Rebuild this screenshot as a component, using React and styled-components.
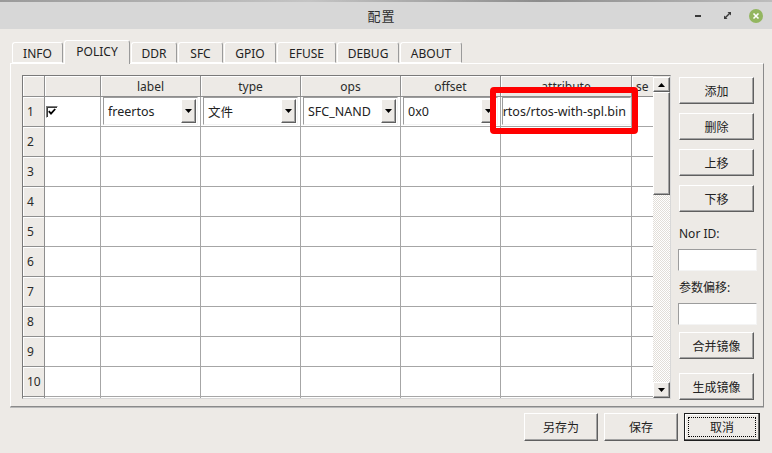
import React from 'react';
import styled, { createGlobalStyle, css } from 'styled-components';

const GlobalStyle = createGlobalStyle`
  body {
    margin: 0;
    background: #edeae6;
    font-family: "Noto Sans", "Noto Sans CJK SC", sans-serif;
    color: #222;
  }
  * { box-sizing: border-box; }
`;

const raised = css`
  background: #edeae6;
  border: 1px solid;
  border-color: #ffffff #5f5f5f #5f5f5f #ffffff;
  box-shadow: inset -1px -1px 0 #a3a3a3;
`;

const sunken = css`
  background: #fff;
  border: 1px solid;
  border-color: #9c9c9c #f4f4f4 #f4f4f4 #9c9c9c;
`;

const Window = styled.div`
  position: relative;
  width: 772px;
  height: 453px;
  overflow: hidden;
  background: #edeae6;
  display: flex;
  flex-direction: column;
`;

const TopStrip = styled.div`
  height: 2px;
  background: linear-gradient(90deg, #9a9a9a, #c4c4c4 40%, #8c8c8c 70%, #bdbdbd);
`;

const TitleBar = styled.div`
  height: 27px;
  background: #d7d7d7;
  display: grid;
  grid-template-columns: 1fr auto 1fr;
  align-items: center;
  padding-right: 9px;
`;

const Title = styled.div`
  font-size: 13px;
  color: #2e2e2e;
  letter-spacing: 1px;
`;

const Controls = styled.div`
  justify-self: end;
  display: flex;
  align-items: center;
  gap: 17px;
`;

const Minimize = styled.div`
  width: 6px;
  height: 2px;
  margin-right: 5px;
  background: #3a3a3a;
`;

const Close = styled.div`
  width: 14px;
  height: 14px;
  border-radius: 50%;
  background: #93b660;
  display: flex;
  align-items: center;
  justify-content: center;
`;

const Body = styled.div`
  flex: 1;
  padding: 11px 8px 0 10px;
  display: flex;
  flex-direction: column;
`;

const TabRow = styled.div`
  display: flex;
  align-items: flex-end;
  gap: 1px;
  height: 23px;
  padding-left: 2px;
  position: relative;
  z-index: 1;
`;

const Tab = styled.div`
  width: ${p => p.$w}px;
  height: ${p => (p.$active ? 24 : 21)}px;
  margin-bottom: ${p => (p.$active ? -1 : 0)}px;
  background: #edeae6;
  border: 1px solid;
  border-bottom: ${p => (p.$active ? 'none' : '1px solid #fff')};
  border-color: #fff #9a9a9a #fff #fff;
  border-radius: 3px 3px 0 0;
  display: flex;
  align-items: center;
  justify-content: center;
  padding: ${p => (p.$active ? '0 0 2px' : '2px 0 0')};
  font-size: 12px;
  color: #222;
`;

const Panel = styled.div`
  width: 754px;
  height: 344px;
  border: 1px solid;
  border-color: #fff #8a8a8a #8a8a8a #fff;
  box-shadow: 0 1px 0 #b9b9b9;
  display: flex;
  gap: 8px;
  padding: 11px 0 0 11px;
`;

const TableFrame = styled.div`
  width: 649px;
  height: 324px;
  display: flex;
  border: 1px solid;
  border-color: #7a7a7a #d8d8d8 #d8d8d8 #7a7a7a;
`;

const Grid = styled.div`
  flex: 1;
  overflow: hidden;
  display: grid;
  grid-template-columns: 22px 56px 100px 100px 100px 100px 131px 60px;
  grid-template-rows: 21px repeat(11, 30px);
  background: #fff;
`;

const HeadCell = styled.div`
  background: #edeae6;
  border-right: 1px solid #8e8e8e;
  border-bottom: 1px solid #8e8e8e;
  box-shadow: inset 1px 1px 0 #fff;
  display: flex;
  align-items: center;
  justify-content: ${p => (p.$left ? 'flex-start' : 'center')};
  padding-left: ${p => (p.$left ? 4 : 0)}px;
  font-size: 12px;
  color: #2a2a2a;
  white-space: nowrap;
  overflow: hidden;
`;

const Cell = styled.div`
  border-right: 1px solid #a6a6a6;
  border-bottom: 1px solid #a6a6a6;
  display: flex;
  align-items: center;
  overflow: hidden;
  padding: ${p => p.$pad || '0'};
`;

const Check = styled.div`
  width: 12px;
  height: 12px;
  margin-left: 1px;
  background: #fff;
  border: 1px solid;
  border-color: #7a7a7a #fff #fff #7a7a7a;
  box-shadow: inset 1px 1px 0 #3a3a3a;
  display: flex;
  align-items: center;
  justify-content: center;
`;

const Combo = styled.div`
  ${sunken};
  width: 100%;
  height: 28px;
  display: flex;
  align-items: stretch;
  font-size: 12.5px;
`;

const ComboText = styled.div`
  flex: 1;
  display: flex;
  align-items: center;
  padding-left: 4px;
  white-space: nowrap;
  overflow: hidden;
`;

const DropButton = styled.div`
  ${raised};
  width: 15px;
  margin: 1px;
  display: flex;
  align-items: center;
  justify-content: center;
`;

const Editor = styled.div`
  ${sunken};
  width: 100%;
  height: 28px;
  display: flex;
  align-items: center;
  justify-content: flex-end;
  padding-right: 4px;
  font-size: 12.5px;
  white-space: nowrap;
  overflow: hidden;
`;

const ScrollBar = styled.div`
  width: 17px;
  display: flex;
  flex-direction: column;
  padding-top: 1px;
`;

const ScrollButton = styled.div`
  ${raised};
  height: ${p => p.$h}px;
  display: flex;
  align-items: center;
  justify-content: center;
`;

const Thumb = styled.div`
  ${raised};
  height: 103px;
`;

const Track = styled.div`
  flex: 1;
  background-color: #edeae6;
  background-image: conic-gradient(#fff 25%, #e2ded8 0 50%, #fff 0 75%, #e2ded8 0);
  background-size: 2px 2px;
`;

const SideColumn = styled.div`
  width: 79px;
  display: flex;
  flex-direction: column;
  padding-top: 2px;
`;

const Button = styled.div`
  ${raised};
  width: ${p => p.$w || 75}px;
  height: ${p => p.$h || 27}px;
  margin-top: ${p => p.$mt || 0}px;
  display: flex;
  align-items: center;
  justify-content: center;
  font-size: 12px;
  color: #222;
  ${p => p.$focus && css`
    border-color: #1e1e1e;
    box-shadow: inset -1px -1px 0 #6a6a6a, inset 1px 1px 0 #fff;
    outline: 1px dotted #000;
    outline-offset: -5px;
  `}
`;

const FieldLabel = styled.div`
  margin-top: ${p => p.$mt}px;
  line-height: 16px;
  font-size: 12px;
  color: #222;
`;

const Field = styled.div`
  ${sunken};
  width: 79px;
  height: 22px;
  margin-left: -1px;
  margin-top: 7px;
`;

const Footer = styled.div`
  display: flex;
  justify-content: flex-end;
  gap: 6px;
  margin-top: 6px;
  padding-right: 4px;
`;

const Highlight = styled.div`
  position: absolute;
  left: 490px;
  top: 87px;
  width: 148px;
  height: 47px;
  border: 6px solid #ff0000;
  border-radius: 4px;
  pointer-events: none;
`;

const Arrow = ({ up }) => (
  <svg width="7" height="4" viewBox="0 0 7 4">
    <path d={up ? 'M0 4 L3.5 0 L7 4Z' : 'M0 0 L7 0 L3.5 4Z'} fill="#000" />
  </svg>
);

const Maximize = () => (
  <svg width="9" height="9" viewBox="0 0 9 9">
    <path d="M2 7 L7 2" stroke="#3a3a3a" strokeWidth="1.4" />
    <path d="M4.5 1 L8 1 L8 4.5Z" fill="#3a3a3a" />
    <path d="M1 4.5 L1 8 L4.5 8Z" fill="#3a3a3a" />
  </svg>
);

const tabs = [
  ['INFO', 51], ['POLICY', 66], ['DDR', 46], ['SFC', 45],
  ['GPIO', 52], ['EFUSE', 59], ['DEBUG', 62], ['ABOUT', 62],
];

const headers = ['', 'label', 'type', 'ops', 'offset', 'attribute', 'se'];

const ComboBox = ({ value }) => (
  <Combo>
    <ComboText>{value}</ComboText>
    <DropButton><Arrow /></DropButton>
  </Combo>
);

const App = () => {
  const rows = Array.from({ length: 11 }, (_, i) => i + 1);
  return (
    <Window>
      <GlobalStyle />
      <TopStrip />
      <TitleBar>
        <div />
        <Title>配置</Title>
        <Controls>
          <Minimize />
          <Maximize />
          <Close>
            <svg width="8" height="8" viewBox="0 0 8 8">
              <path d="M1.5 1.5 L6.5 6.5 M6.5 1.5 L1.5 6.5" stroke="#fff" strokeWidth="1.6" />
            </svg>
          </Close>
        </Controls>
      </TitleBar>
      <Body>
        <TabRow>
          {tabs.map(([name, w]) => (
            <Tab key={name} $w={w} $active={name === 'POLICY'}>{name}</Tab>
          ))}
        </TabRow>
        <Panel>
          <TableFrame>
            <Grid>
              <HeadCell />
              {headers.map((h, i) => (
                <HeadCell key={i} $left={h === 'se'}>{h}</HeadCell>
              ))}
              {rows.map(r => (
                <React.Fragment key={r}>
                  <HeadCell $left>{r <= 10 ? r : ''}</HeadCell>
                  {r === 1 ? (
                    <>
                      <Cell>
                        <Check>
                          <svg width="8" height="7" viewBox="0 0 8 7">
                            <path d="M0.8 3.2 L3 5.6 L7.2 1" stroke="#000" strokeWidth="1.8" fill="none" />
                          </svg>
                        </Check>
                      </Cell>
                      <Cell $pad="0 2px 1px 2px"><ComboBox value="freertos" /></Cell>
                      <Cell $pad="0 2px 1px 2px"><ComboBox value="文件" /></Cell>
                      <Cell $pad="0 2px 1px 2px"><ComboBox value="SFC_NAND" /></Cell>
                      <Cell $pad="0 2px 1px 2px"><ComboBox value="0x0" /></Cell>
                      <Cell $pad="0 0 1px 1px"><Editor>freertos/rtos-with-spl.bin</Editor></Cell>
                      <Cell />
                    </>
                  ) : (
                    headers.map((_, i) => <Cell key={i} />)
                  )}
                </React.Fragment>
              ))}
            </Grid>
            <ScrollBar>
              <ScrollButton $h={15}><Arrow up /></ScrollButton>
              <Thumb />
              <Track />
              <ScrollButton $h={16}><Arrow /></ScrollButton>
            </ScrollBar>
          </TableFrame>
          <SideColumn>
            <Button>添加</Button>
            <Button $mt={9}>删除</Button>
            <Button $mt={9}>上移</Button>
            <Button $mt={9}>下移</Button>
            <FieldLabel $mt={14}>Nor ID:</FieldLabel>
            <Field />
            <FieldLabel $mt={9}>参数偏移:</FieldLabel>
            <Field />
            <Button $mt={7}>合并镜像</Button>
            <Button $mt={14}>生成镜像</Button>
          </SideColumn>
        </Panel>
        <Footer>
          <Button $w={74} $h={28}>另存为</Button>
          <Button $w={74} $h={28}>保存</Button>
          <Button $w={76} $h={28} $focus>取消</Button>
        </Footer>
      </Body>
      <Highlight />
    </Window>
  );
};

export default App;
